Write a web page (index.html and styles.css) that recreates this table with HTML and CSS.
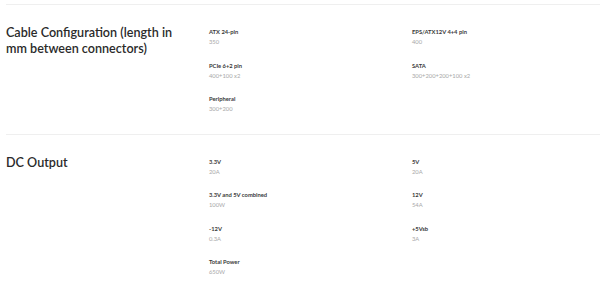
FILE: index.html
```html
<!DOCTYPE html>
<html>
<head>
<meta charset="utf-8">
<link rel="stylesheet" href="styles.css">
</head>
<body>
<div class="specs">
  <section class="spec-section">
    <h2 class="spec-title">Cable Configuration (length in mm between connectors)</h2>
    <div class="spec-items">
      <div class="spec-item"><div class="spec-label">ATX 24-pin</div><div class="spec-value">350</div></div>
      <div class="spec-item"><div class="spec-label">EPS/ATX12V 4+4 pin</div><div class="spec-value">400</div></div>
      <div class="spec-item"><div class="spec-label">PCIe 6+2 pin</div><div class="spec-value">400+100 x2</div></div>
      <div class="spec-item"><div class="spec-label">SATA</div><div class="spec-value">300+200+200+100 x2</div></div>
      <div class="spec-item"><div class="spec-label">Peripheral</div><div class="spec-value">300+200</div></div>
    </div>
  </section>
  <section class="spec-section">
    <h2 class="spec-title">DC Output</h2>
    <div class="spec-items">
      <div class="spec-item"><div class="spec-label">3.3V</div><div class="spec-value">20A</div></div>
      <div class="spec-item"><div class="spec-label">5V</div><div class="spec-value">20A</div></div>
      <div class="spec-item"><div class="spec-label">3.3V and 5V combined</div><div class="spec-value">100W</div></div>
      <div class="spec-item"><div class="spec-label">12V</div><div class="spec-value">54A</div></div>
      <div class="spec-item"><div class="spec-label">-12V</div><div class="spec-value">0.3A</div></div>
      <div class="spec-item"><div class="spec-label">+5Vsb</div><div class="spec-value">3A</div></div>
      <div class="spec-item"><div class="spec-label">Total Power</div><div class="spec-value">650W</div></div>
    </div>
  </section>
</div>
</body>
</html>
```
FILE: styles.css
```css
html, body {
  margin: 0;
  padding: 0;
  background: #ffffff;
}
body {
  font-family: Lato, "Noto Sans", sans-serif;
  color: #2b2b2b;
  overflow: hidden;
}
.specs {
  padding: 4px 0 0 6px;
}
.spec-section {
  display: grid;
  grid-template-columns: 203px 1fr;
  border-top: 1px solid #efefef;
  padding: 22px 0 6px;
}
.spec-section:last-child {
  padding-bottom: 0;
}
.spec-section:last-child .spec-item:last-child {
  margin-bottom: 0;
}
.spec-title {
  margin: -2px 0 0;
  font-size: 12.6px;
  line-height: 15.5px;
  font-weight: 600;
  color: #2a2a2a;
  padding-right: 28px;
}
.spec-items {
  display: grid;
  grid-template-columns: 203px 1fr;
}
.spec-item {
  margin-bottom: 13.5px;
}
.spec-label {
  font-size: 5.8px;
  line-height: 10px;
  font-weight: 700;
  color: #3a3a3a;
}
.spec-value {
  font-size: 5.8px;
  line-height: 10px;
  color: #a8a8a8;
}
```
